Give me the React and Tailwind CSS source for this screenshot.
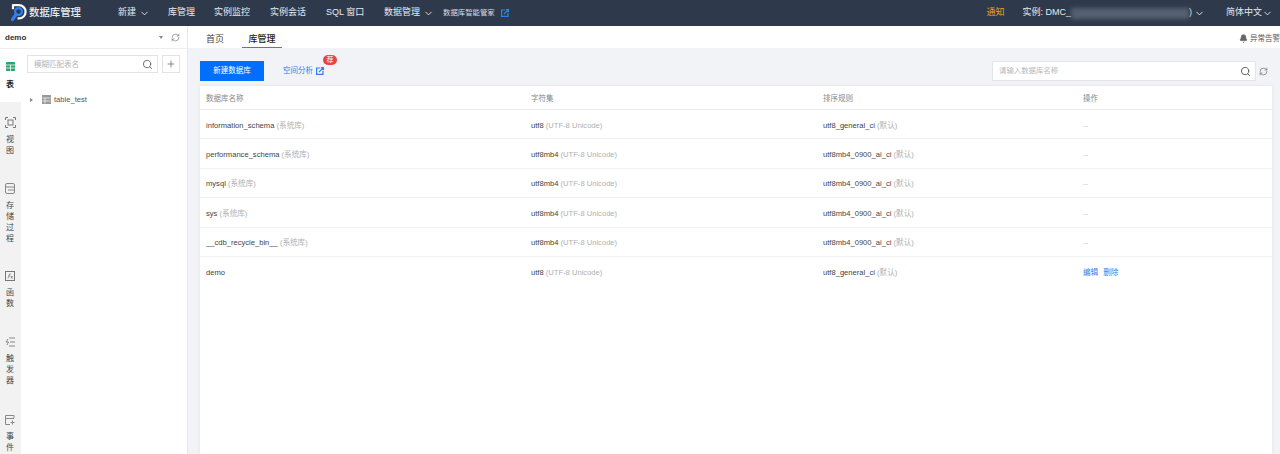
import { Bell, ChevronDown, Plus, RefreshCw, Search } from 'lucide-react'

const FONT = { fontFamily: '"Liberation Sans", "Noto Sans CJK SC", sans-serif' }

const ROWS = [
  { name: 'information_schema', sys: true, charset: 'utf8', coll: 'utf8_general_ci' },
  { name: 'performance_schema', sys: true, charset: 'utf8mb4', coll: 'utf8mb4_0900_ai_ci' },
  { name: 'mysql', sys: true, charset: 'utf8mb4', coll: 'utf8mb4_0900_ai_ci' },
  { name: 'sys', sys: true, charset: 'utf8mb4', coll: 'utf8mb4_0900_ai_ci' },
  { name: '__cdb_recycle_bin__', sys: true, charset: 'utf8mb4', coll: 'utf8mb4_0900_ai_ci' },
  { name: 'demo', sys: false, charset: 'utf8', coll: 'utf8_general_ci' },
]

const Logo = () => (
  <svg width="16" height="18" viewBox="0 0 16 18" fill="none">
    <path d="M2 1.2h6a6.6 6.6 0 0 1 0 13.2H6.500" stroke="#f4f7fb" strokeWidth="2.200" />
    <path d="M2 .2v5" stroke="#f4f7fb" strokeWidth="2.200" />
    <circle cx="7.500" cy="7.500" r="3.400" fill="#2e3a4c" stroke="#2f80f5" strokeWidth="2.200" />
    <path d="M5 10.500 1.500 15.500" stroke="#2f80f5" strokeWidth="3.200" strokeLinecap="round" />
  </svg>
)

const LinkOut = ({ color }) => (
  <svg width="8" height="8" viewBox="0 0 8 8" fill="none" stroke={color} strokeWidth="1.200">
    <path d="M4 1H.6v6.400H7V4" />
    <path d="M3 5 7.200.8M4.800.6h2.600v2.600" />
  </svg>
)

const RAIL = [
  {
    label: ['表'], h: 'h-[53px]', pad: 'pt-[13px]', gap: 'mt-[8px]', active: true, icon: (
      <svg width="9" height="9" viewBox="0 0 9 9"><rect width="9" height="9" rx="0.800" fill="#27a56c" /><path d="M0 3h9M0 6h9M4.500 3v6" stroke="#fff" strokeWidth="0.800" /></svg>
    ),
  },
  {
    label: ['视', '图'], h: 'h-[66px]', icon: (
      <svg width="11" height="11" viewBox="0 0 11 11" fill="none" stroke="#777" strokeWidth="1"><path d="M.5 3V.5H3M8 .5h2.500V3M.5 8v2.500H3M8 10.500h2.500V8" /><rect x="3" y="3" width="5" height="5" /></svg>
    ),
  },
  {
    label: ['存', '储', '过', '程'], h: 'h-[88px]', icon: (
      <svg width="10" height="11" viewBox="0 0 10 11" fill="none" stroke="#888" strokeWidth="1"><rect x=".5" y=".5" width="9" height="10" rx="1.500" /><path d="M.5 4h9M3 7h6" /></svg>
    ),
  },
  {
    label: ['函', '数'], h: 'h-[66px]', icon: (
      <svg width="10" height="10" viewBox="0 0 10 10" fill="none" stroke="#777" strokeWidth="1"><rect x=".5" y=".5" width="9" height="9" /><path d="M3 7.500 4.500 3H6M3.500 5h2M6 5l1.500 2.500M7.500 5 6 7.500" strokeWidth="0.700" /></svg>
    ),
  },
  {
    label: ['触', '发', '器'], h: 'h-[78px]', icon: (
      <svg width="10" height="10" viewBox="0 0 10 10" fill="none" stroke="#888" strokeWidth="1"><path d="M4 1h6M5 5h5M4 9h6M3 2 1 5h2.500L2 8" /></svg>
    ),
  },
  {
    label: ['事', '件'], h: 'h-[54px]', icon: (
      <svg width="10" height="10" viewBox="0 0 10 10" fill="none" stroke="#888" strokeWidth="1"><path d="M9 3V.5H.5v9H5M.5 3.500H9M7.500 5.500v4M5.500 7.500h4" /></svg>
    ),
  },
]

function RailItem({ item }) {
  return (
    <div className={`${item.h} ${item.pad || 'pt-[15px]'} pr-[1px] flex flex-col items-center ${item.active ? 'bg-white' : ''}`}>
      {item.icon}
      <div className={`${item.gap || 'mt-[6px]'} flex flex-col items-center text-[8px] leading-[11px] ${item.active ? 'font-bold text-[#222]' : 'text-[#444]'}`}>
        {item.label.map(ch => <span key={ch}>{ch}</span>)}
      </div>
    </div>
  )
}

function NavItem({ children, caret }) {
  return (
    <span className="flex items-center gap-[3px] text-[9px] text-[#e6e9ee] whitespace-nowrap">
      {children}
      {caret && <ChevronDown size={11} />}
    </span>
  )
}

export default function App() {
  return (
    <div className="h-[454px] w-[1280px] overflow-hidden flex flex-col bg-[#f2f3f7]" style={FONT}>
      {/* Top nav */}
      <div className="h-[26px] shrink-0 bg-[#2e3a4c] flex items-center">
        <div className="pl-[11px] w-[118px] flex items-center gap-[2px] shrink-0">
          <Logo />
          <span className="text-[10.400px] font-medium text-[#e9ecf1] whitespace-nowrap">数据库管理</span>
        </div>
        <div className="flex items-center">
          <div className="w-[50px]"><NavItem caret>新建</NavItem></div>
          <div className="w-[46px]"><NavItem>库管理</NavItem></div>
          <div className="w-[56px]"><NavItem>实例监控</NavItem></div>
          <div className="w-[56px]"><NavItem>实例会话</NavItem></div>
          <div className="w-[58px]"><NavItem>SQL 窗口</NavItem></div>
          <div className="w-[59px]"><NavItem caret>数据管理</NavItem></div>
          <span className="flex items-center gap-[6px] text-[7.400px] text-[#d8dce3] whitespace-nowrap">
            数据库智能管家
            <LinkOut color="#2f80f5" />
          </span>
        </div>
        <div className="ml-auto flex items-center pr-[7px]">
          <span className="text-[9px] text-[#e5a21a] mr-[18px]">通知</span>
          <span className="flex items-center text-[9px] text-[#e6e9ee] whitespace-nowrap">
            实例: DMC_
            <span className="inline-block w-[118px] h-[11px] bg-[#556070] blur-[2px]" />
            )
            <ChevronDown size={11} className="ml-[2px]" />
          </span>
          <span className="flex items-center text-[9px] text-[#e6e9ee] ml-[21px] whitespace-nowrap">
            简体中文
            <ChevronDown size={11} />
          </span>
        </div>
      </div>

      <div className="flex-1 flex min-h-0">
        {/* Left tree */}
        <div className="w-[188px] shrink-0 bg-white border-r border-[#e6e8ec] flex flex-col">
          <div className="h-[23px] shrink-0 flex items-center justify-between pl-[5px] pr-[7px] pt-[1px] border-b border-[#eeeeee]">
            <span className="text-[8px] font-bold text-[#333]">demo</span>
            <span className="flex items-center gap-[8px]">
              <span className="w-0 h-0 border-l-[2.500px] border-r-[2.500px] border-t-[3px] border-l-transparent border-r-transparent border-t-[#888]" />
              <RefreshCw size={9} className="text-[#888]" />
            </span>
          </div>
          <div className="flex-1 flex min-h-0">
            <div className="w-[21px] shrink-0 bg-[#f2f2f2]">
              {RAIL.map(item => <RailItem key={item.label[0]} item={item} />)}
            </div>
            <div className="flex-1 min-w-0">
              <div className="flex items-center gap-[4px] pl-[6px] pt-[6px]">
                <div className="w-[131px] h-[18px] border border-[#e3e3e3] flex items-center justify-between pl-[6px] pr-[4px]">
                  <span className="pt-[1px] text-[7.500px] text-[#b5b5b5]">模糊匹配表名</span>
                  <Search size={11} className="text-[#666]" />
                </div>
                <div className="w-[18px] h-[18px] border border-[#e3e3e3] flex items-center justify-center">
                  <Plus size={10} className="text-[#777]" />
                </div>
              </div>
              <div className="flex items-center pl-[9px] mt-[21px]">
                <span className="w-0 h-0 border-t-[2.500px] border-b-[2.500px] border-l-[3px] border-t-transparent border-b-transparent border-l-[#888]" />
                <svg width="9" height="9" viewBox="0 0 9 9" className="ml-[9px]"><rect width="9" height="9" fill="#999" /><path d="M.5 3h8M.5 6h8M3 3v5.500" stroke="#fff" strokeWidth="0.700" /></svg>
                <span className="ml-[3px] text-[7.600px] text-[#555]">table_test</span>
              </div>
            </div>
          </div>
        </div>

        {/* Main */}
        <div className="flex-1 min-w-0 flex flex-col">
          <div className="h-[22px] shrink-0 bg-white flex items-end">
            <span className="w-[54px] h-[22px] pt-[6px] flex items-center justify-center text-[9px] text-[#444]">首页</span>
            <span className="w-[40px] h-[22px] pt-[6px] flex items-center justify-center text-[9px] font-medium text-[#222] border-b border-[#2f80f5]">库管理</span>
            <span className="ml-auto flex items-center gap-[2px] mb-[4px] text-[7.500px] text-[#555] whitespace-nowrap">
              <Bell size={9} fill="#666" className="text-[#666]" />
              异常告警
            </span>
          </div>
          <div className="flex-1 min-h-0 pl-[12px] pr-[8px] pt-[13px] flex flex-col">
            <div className="h-[20px] shrink-0 flex items-center">
              <div className="w-[64px] h-[20px] bg-[#006eff] flex items-center justify-center text-[7.500px] text-white">新建数据库</div>
              <span className="relative ml-[19px] flex items-center gap-[3px] text-[7.500px] text-[#2f7ff0]">
                空间分析
                <LinkOut color="#2f7ff0" />
                <span className="absolute -top-[10px] left-[40px] w-[14px] h-[10px] rounded-full bg-[#e54545] text-white text-[7px] leading-[10px] text-center">荐</span>
              </span>
              <div className="ml-auto w-[264px] h-[20px] bg-white border border-[#e3e5ea] flex items-center justify-between pl-[6px] pr-[4px]">
                <span className="text-[7.400px] text-[#b8b8b8]">请输入数据库名称</span>
                <Search size={11} className="text-[#555]" />
              </div>
              <RefreshCw size={9} className="text-[#777] ml-[3px] mr-[4px]" />
            </div>
            <div className="mt-[5px] flex-1 bg-white shadow-[0_0_3px_rgba(0,0,0,0.08)]">
              <div className="grid grid-cols-[325px_292px_260px_1fr] h-[24px] items-center pl-[6px] pt-[2px] border-b border-[#e8eaee] text-[7.500px] text-[#888]">
                <span>数据库名称</span>
                <span>字符集</span>
                <span>排序规则</span>
                <span>操作</span>
              </div>
              {ROWS.map(r => (
                <div key={r.name} className="grid grid-cols-[325px_292px_260px_1fr] h-[29.400px] items-center pl-[6px] pt-[2px] border-b border-[#f1f2f4] text-[7.600px] text-[#444] last:border-b-0">
                  <span>{r.name} {r.sys && <span className="text-[#b0b0b0]">(系统库)</span>}</span>
                  <span>{r.charset} <span className="text-[#b0b0b0]">(UTF-8 Unicode)</span></span>
                  <span>{r.coll} <span className="text-[#b0b0b0]">(默认)</span></span>
                  {r.sys
                    ? <span className="text-[#c4c4c4]">--</span>
                    : <span className="text-[#2f7ff0]">编辑<span className="ml-[5px]">删除</span></span>}
                </div>
              ))}
            </div>
          </div>
        </div>
      </div>
    </div>
  )
}
